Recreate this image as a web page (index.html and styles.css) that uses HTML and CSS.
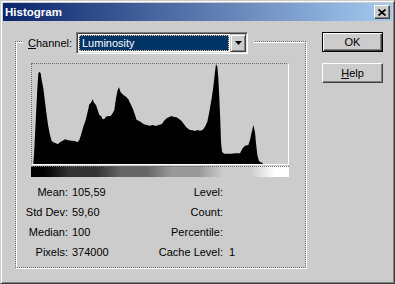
FILE: index.html
```html
<!DOCTYPE html>
<html lang="en">
<head>
  <meta charset="UTF-8">
  <title>Histogram</title>
  <link rel="stylesheet" href="styles.css">
</head>

<body>
  <div class="window">
    <div class="titlebar">
      <span class="title">Histogram</span>
      <button class="close-btn">
        <svg width="8" height="7" viewBox="0 0 8 7"><path d="M0.5 0.5 L7.5 6.5 M7.5 0.5 L0.5 6.5" stroke="#000" stroke-width="1.7"/></svg>
      </button>
    </div>

    <div class="content">
      <div class="group">
        <div class="group-head">
          <span class="field-label"><u>C</u>hannel:</span>
          <div class="combo">
            <span class="combo-value">Luminosity</span>
            <span class="combo-btn">
              <svg width="7" height="4" viewBox="0 0 7 4"><path d="M0 0 H7 L3.5 4 Z" fill="#000"/></svg>
            </span>
          </div>
        </div>

        <div class="hist-frame">
          <svg width="256" height="100" viewBox="36 27 768 300" preserveAspectRatio="none">
            <path fill="#000" d="M40 327 L40 325 L42 300 L47 200 L52 100 L55 55 L58 50 L62 55 L65 75 L70 100 L75 140 L80 180 L85 215 L90 240 L95 258 L100 262 L108 265 L113 268 L120 262 L128 257 L135 253 L145 256 L155 257 L165 258 L172 262 L178 255 L183 240 L190 215 L197 195 L203 170 L208 148 L213 143 L218 133 L222 143 L228 150 L233 165 L238 180 L243 183 L248 193 L253 192 L258 185 L265 183 L272 183 L278 175 L283 165 L288 130 L293 105 L297 97 L302 112 L310 120 L318 125 L325 133 L332 148 L338 160 L345 180 L350 195 L358 198 L365 203 L372 208 L380 210 L390 212 L398 210 L408 213 L415 210 L425 208 L432 198 L440 190 L448 186 L455 183 L462 186 L470 187 L478 193 L485 198 L492 208 L500 218 L510 225 L518 226 L525 228 L532 225 L540 227 L548 225 L555 215 L562 200 L568 170 L575 130 L580 95 L585 50 L588 27 L592 35 L595 70 L598 130 L601 200 L603 260 L606 290 L612 296 L625 296 L635 296 L645 295 L660 295 L668 280 L675 272 L685 270 L690 255 L695 232 L700 210 L705 232 L708 265 L712 300 L717 318 L722 322 L728 324 L728 327 Z"/>
          </svg>
        </div>
        <div class="levels"></div>

        <div class="stats">
          <span class="stat-label">Mean:</span><span class="stat-value">105,59</span>
          <span class="stat-label">Level:</span><span class="stat-value"></span>
          <span class="stat-label">Std Dev:</span><span class="stat-value">59,60</span>
          <span class="stat-label">Count:</span><span class="stat-value"></span>
          <span class="stat-label">Median:</span><span class="stat-value">100</span>
          <span class="stat-label">Percentile:</span><span class="stat-value"></span>
          <span class="stat-label">Pixels:</span><span class="stat-value">374000</span>
          <span class="stat-label">Cache Level:</span><span class="stat-value">1</span>
        </div>
      </div>

      <div class="buttons">
        <button class="btn btn-default">OK</button>
        <button class="btn"><u>H</u>elp</button>
      </div>
    </div>
  </div>
</body>
</html>
```

FILE: styles.css
```css
/* Global */
body {
  margin: 0;
  background: #cccccc;
  font-family: "Liberation Sans", Arial, sans-serif;
  font-size: 11px;
  color: #000;
}

.window {
  width: 395px;
  height: 284px;
  box-sizing: border-box;
  background: #cccccc;
  border: 1px solid;
  border-color: #cccccc #404040 #404040 #cccccc;
  box-shadow: inset 1px 1px 0 #fff, inset -1px -1px 0 #808080;
  padding: 2px;
}

/* Title bar */
.titlebar {
  height: 18px;
  display: flex;
  align-items: center;
  padding: 0 2px;
  background: linear-gradient(90deg, #0a246a 0%, #a6caf0 100%);
}

.title {
  flex: 1;
  color: #fff;
  font-weight: bold;
  font-size: 11.5px;
}

.close-btn {
  width: 16px;
  height: 14px;
  box-sizing: border-box;
  padding: 0;
  display: flex;
  align-items: center;
  justify-content: center;
  background: #cccccc;
  border: 1px solid;
  border-color: #fff #404040 #404040 #fff;
  box-shadow: inset -1px -1px 0 #808080;
}

/* Body */
.content {
  display: flex;
  align-items: flex-start;
  padding: 11px 0 0 12px;
}

.group {
  margin-top: 9px;
  width: 291px;
  height: 227px;
  box-sizing: border-box;
  border: 1px dotted #707070;
  box-shadow: 1px 1px 0 #fff, inset 1px 1px 0 #fff;
}

.group-head {
  display: flex;
  align-items: center;
  width: fit-content;
  margin: -10px 0 0 7px;
  padding: 0 6px 0 5px;
  background: #cccccc;
}

.field-label {
  width: 48px;
}

.combo {
  width: 172px;
  height: 22px;
  box-sizing: border-box;
  display: flex;
  background: #fff;
  border: 1px solid;
  border-color: #808080 #fff #fff #808080;
  box-shadow: inset 1px 1px 0 #404040, inset -1px -1px 0 #dfdfdf;
  padding: 1px;
}

.combo-value {
  flex: 1;
  margin: 1px;
  padding-left: 3px;
  line-height: 16px;
  background: #003366;
  color: #fff;
  outline: 1px dotted #ffcc88;
  outline-offset: -1px;
}

.combo-btn {
  width: 16px;
  height: 18px;
  box-sizing: border-box;
  display: flex;
  align-items: center;
  justify-content: center;
  background: #cccccc;
  border: 1px solid;
  border-color: #cccccc #404040 #404040 #cccccc;
  box-shadow: inset 1px 1px 0 #fff, inset -1px -1px 0 #808080;
}

/* Histogram */
.hist-frame {
  margin: 9px 0 0 15px;
  width: 258px;
  height: 102px;
  box-sizing: border-box;
  border-top: 1px dotted #707070;
  border-left: 1px dotted #707070;
  border-right: 1px solid #fff;
  border-bottom: 1px solid #fff;
}

.hist-frame svg {
  display: block;
}

.levels {
  margin: 1px 0 0 15px;
  width: 258px;
  height: 11px;
  box-sizing: border-box;
  border-top: 1px dotted #707070;
  background: linear-gradient(90deg,
    #000 0%, #000 5%, #333 15%, #333 25.5%,
    #666 35%, #666 45%, #999 54.5%, #999 65%,
    #ccc 74.5%, #ccc 85%, #fff 94.5%, #fff 100%);
}

/* Stats */
.stats {
  margin-top: 5px;
  display: grid;
  grid-template-columns: 56px 78px 73px auto;
  line-height: 20px;
}

.stat-label {
  text-align: right;
}

.stat-label:nth-child(4n+1) {
  padding-right: 4px;
}

.stat-value {
  padding-left: 0;
}

.stat-value:nth-child(4n) {
  padding-left: 6px;
}

/* Buttons */
.buttons {
  display: flex;
  flex-direction: column;
  gap: 11px;
  margin-left: 16px;
}

.btn {
  width: 61px;
  height: 20px;
  box-sizing: border-box;
  padding: 0;
  font-family: "Liberation Sans", Arial, sans-serif;
  font-size: 11px;
  color: #000;
  background: #cccccc;
  border: 1px solid;
  border-color: #fff #404040 #404040 #fff;
  box-shadow: inset -1px -1px 0 #808080;
}

.btn-default {
  border-color: #000;
  box-shadow: inset 1px 1px 0 #fff, inset -1px -1px 0 #404040, inset -2px -2px 0 #808080;
}
```
